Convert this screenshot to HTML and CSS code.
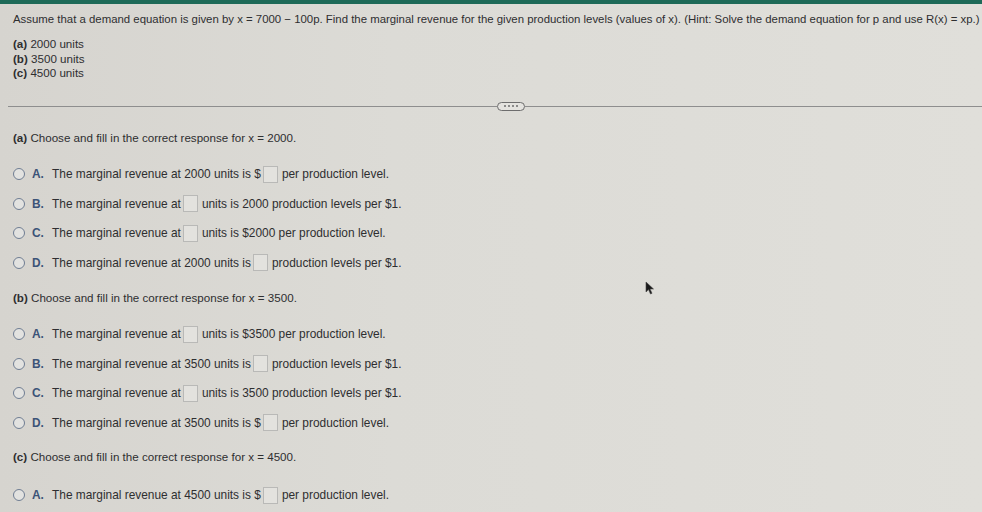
FILE: index.html
```html
<!DOCTYPE html>
<html>
<head>
<meta charset="utf-8">
<link rel="stylesheet" href="styles.css">
</head>
<body>
<div class="topbar"></div>
<div class="page">
  <p class="question">Assume that a demand equation is given by x = 7000 − 100p. Find the marginal revenue for the given production levels (values of x). (Hint: Solve the demand equation for p and use R(x) = xp.)</p>
  <ul class="levels">
    <li><b>(a)</b> 2000 units</li>
    <li><b>(b)</b> 3500 units</li>
    <li><b>(c)</b> 4500 units</li>
  </ul>
</div>
<div class="divider">
  <div class="line short"></div>
  <div class="pill"><span></span><span></span><span></span><span></span></div>
  <div class="line"></div>
</div>
<div class="page">
  <section class="part part-a">
    <p class="heading"><b>(a)</b> Choose and fill in the correct response for x = 2000.</p>
    <div class="opts">
      <div class="opt"><span class="radio"></span><span class="letter">A.</span><span class="txt">The marginal revenue at 2000 units is $</span><span class="box"></span><span class="txt gap">per production level.</span></div>
      <div class="opt"><span class="radio"></span><span class="letter">B.</span><span class="txt">The marginal revenue at</span><span class="box"></span><span class="txt gap">units is 2000 production levels per $1.</span></div>
      <div class="opt"><span class="radio"></span><span class="letter">C.</span><span class="txt">The marginal revenue at</span><span class="box"></span><span class="txt gap">units is $2000 per production level.</span></div>
      <div class="opt"><span class="radio"></span><span class="letter">D.</span><span class="txt">The marginal revenue at 2000 units is</span><span class="box"></span><span class="txt gap">production levels per $1.</span></div>
    </div>
  </section>
  <section class="part part-b">
    <p class="heading"><b>(b)</b> Choose and fill in the correct response for x = 3500.</p>
    <div class="opts">
      <div class="opt"><span class="radio"></span><span class="letter">A.</span><span class="txt">The marginal revenue at</span><span class="box"></span><span class="txt gap">units is $3500 per production level.</span></div>
      <div class="opt"><span class="radio"></span><span class="letter">B.</span><span class="txt">The marginal revenue at 3500 units is</span><span class="box"></span><span class="txt gap">production levels per $1.</span></div>
      <div class="opt"><span class="radio"></span><span class="letter">C.</span><span class="txt">The marginal revenue at</span><span class="box"></span><span class="txt gap">units is 3500 production levels per $1.</span></div>
      <div class="opt"><span class="radio"></span><span class="letter">D.</span><span class="txt">The marginal revenue at 3500 units is $</span><span class="box"></span><span class="txt gap">per production level.</span></div>
    </div>
  </section>
  <section class="part part-c">
    <p class="heading"><b>(c)</b> Choose and fill in the correct response for x = 4500.</p>
    <div class="opts">
      <div class="opt"><span class="radio"></span><span class="letter">A.</span><span class="txt">The marginal revenue at 4500 units is $</span><span class="box"></span><span class="txt gap">per production level.</span></div>
    </div>
  </section>
</div>
<svg class="cursor" width="10" height="14" viewBox="0 0 10 14"><path d="M1 1 L1 11 L3.5 8.6 L5.5 13 L7 12.3 L5 8 L8.5 8 Z" fill="#1a1a1a" stroke="#444" stroke-width="0.6"/></svg>
</body>
</html>
```

FILE: styles.css
```css
html, body {
  margin: 0;
  padding: 0;
}
body {
  width: 982px;
  height: 512px;
  overflow: hidden;
  background: linear-gradient(90deg, #d6d4cf 0%, #dcdbd6 40%, #e0dfda 100%);
  font-family: "Liberation Sans", Arial, sans-serif;
  color: #2e2e30;
  position: relative;
}
.topbar {
  height: 4px;
  background: #1e6a58;
}
.page {
  padding-left: 13px;
}
p { margin: 0; }
b { font-weight: bold; }
.question {
  margin-top: 8px;
  font-size: 11.4px;
  line-height: 14px;
  white-space: nowrap;
}
.levels {
  list-style: none;
  margin: 11px 0 0 0;
  padding: 0;
  font-size: 11.6px;
  line-height: 14.5px;
}
.divider {
  margin-top: 21px;
  display: flex;
  align-items: center;
  height: 9px;
  padding-left: 8px;
}
.line {
  flex: 1;
  height: 1px;
  background: #8e8e8e;
}
.line.short {
  flex: 0 0 489px;
}
.pill {
  width: 26px;
  height: 7px;
  border: 1px solid #6d6d6d;
  border-radius: 5px;
  background: #e4e3df;
  display: flex;
  align-items: center;
  justify-content: center;
  gap: 2px;
}
.pill span {
  width: 2px;
  height: 2px;
  background: #6d6d6d;
  border-radius: 1px;
}
.heading {
  font-size: 11.6px;
  line-height: 14px;
}
.part-a { margin-top: 20px; }
.part-b { margin-top: 13px; }
.part-c { margin-top: 12px; }
.opts {
  margin-top: 15px;
}
.part-c .opts { margin-top: 17px; }
.opt {
  display: flex;
  align-items: center;
  height: 29.5px;
  font-size: 11.9px;
}
.radio {
  width: 10px;
  height: 10px;
  border: 1.2px solid #6f7d92;
  border-radius: 50%;
  background: #e2e2e0;
  flex: 0 0 auto;
}
.letter {
  font-weight: bold;
  color: #3c5378;
  margin-left: 7px;
  width: 20px;
}
.txt {
  white-space: nowrap;
}
.box {
  width: 13px;
  height: 15px;
  border: 1px solid #b9b9b7;
  background: #e3e2de;
  margin-left: 2px;
  flex: 0 0 auto;
}
.gap {
  margin-left: 4px;
}
.cursor {
  position: absolute;
  left: 645px;
  top: 281px;
}
```
